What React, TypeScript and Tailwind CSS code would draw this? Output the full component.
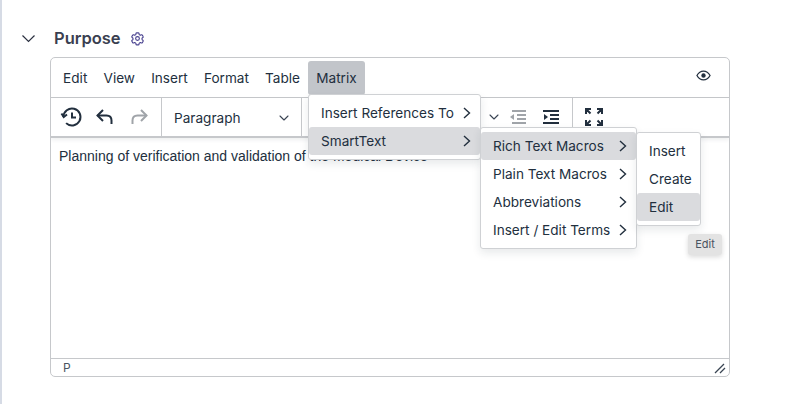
import React from 'react';
import { ChevronDown } from 'lucide-react';

const MenuBtn = ({ label, active = false }: { label: string; active?: boolean }) => (
  <div className={`h-[34px] px-[8.100px] pt-[1px] flex items-center rounded-[3px] ${active ? 'bg-[#c2c5ca]' : ''}`}>{label}</div>
);

const MenuItem = ({ label, active = false, arrow = true }: { label: string; active?: boolean; arrow?: boolean }) => (
  <div className={`h-[28px] w-full flex items-center justify-between rounded-[3px] pl-[12px] pr-[8px] text-[13.600px] text-[#222f3e] ${active ? 'bg-[#dadbde]' : ''}`}>
    <span className="whitespace-nowrap">{label}</span>
    {arrow && (
      <svg width="10" height="14" viewBox="0 0 10 14" fill="none" stroke="#222f3e" strokeWidth="1.400" className="ml-1 shrink-0">
        <path d="M2 2 L7.500 7 L2 12" />
      </svg>
    )}
  </div>
);

const Popup = ({ className, children }: { className: string; children: React.ReactNode }) => (
  <div className={`absolute z-10 bg-white border border-[#cfd1d4] rounded-[3px] py-[4px] shadow-[0_4px_8px_rgba(34,47,62,0.1)] ${className}`}>{children}</div>
);

export default function App() {
  return (
    <div className="relative w-[804px] h-[404px] overflow-hidden bg-white border-l-2 border-[#d6dbe5] font-['Inter',sans-serif]">
      <div className="flex items-center h-[20px] mt-[28px] ml-[16px]">
        <svg width="20" height="20" viewBox="0 0 20 20" fill="none" stroke="#2b3040" strokeWidth="1.200">
          <path d="M4.500 7.500L10.500 13.500L16.500 7.500" />
        </svg>
        <span className="ml-[16px] text-[16.500px] font-semibold text-[#3a3f51]">Purpose</span>
        <svg width="15" height="15" viewBox="0 0 24 24" fill="none" stroke="#4a4390" strokeWidth="1.800" className="ml-[9px]">
          <path d="M9.600 3.900c.1-.5.6-.9 1.100-.9h2.600c.5 0 1 .4 1.100.9l.2 1.400c.1.4.4.7.7.9l.5.3c.4.2.8.2 1.200.1l1.300-.5c.5-.2 1.100 0 1.400.5l1.300 2.300c.3.5.2 1.100-.3 1.400l-1.100.9c-.3.3-.5.7-.4 1.100v.6c0 .4.1.8.4 1.100l1.100.9c.4.3.5.9.3 1.400l-1.300 2.300c-.3.5-.9.7-1.400.5l-1.300-.5c-.4-.1-.8-.1-1.200.1l-.5.3c-.3.2-.6.5-.7.9l-.2 1.400c-.1.5-.6.9-1.100.9h-2.600c-.5 0-1-.4-1.100-.9l-.2-1.400c-.1-.4-.4-.7-.7-.9l-.5-.3c-.4-.2-.8-.2-1.200-.1l-1.300.5c-.5.2-1.100 0-1.400-.5l-1.300-2.300c-.3-.5-.2-1.100.3-1.400l1.100-.9c.3-.3.5-.7.4-1.100v-.6c0-.4-.1-.8-.4-1.100l-1.100-.9c-.4-.3-.5-.9-.3-1.400l1.300-2.300c.3-.5.9-.7 1.400-.5l1.300.5c.4.1.8.1 1.200-.1l.5-.3c.3-.2.6-.5.7-.9z" />
          <circle cx="12" cy="12" r="3" />
        </svg>
      </div>

      <div className="ml-[48px] mt-[9px] w-[680px] h-[320px] border border-[#c6c8cb] rounded-[5px] flex flex-col overflow-hidden">
        {/* menubar */}
        <div className="h-[40px] shrink-0 flex items-center justify-between pl-[4px] pr-[18px] text-[13.600px] text-[#222f3e] border-b border-[#c6c8cb]">
          <div className="flex items-center">
            <MenuBtn label="Edit" />
            <MenuBtn label="View" />
            <MenuBtn label="Insert" />
            <MenuBtn label="Format" />
            <MenuBtn label="Table" />
            <MenuBtn label="Matrix" active />
          </div>
          <svg width="15" height="15" viewBox="0 0 24 24" fill="none" stroke="#222f3e" strokeWidth="2" className="-mt-[4px]">
            <path d="M1.500 12C4 7.500 7.500 5 12 5s8 2.500 10.500 7c-2.500 4.500-6 7-10.500 7S4 16.500 1.500 12z" />
            <circle cx="12" cy="12" r="3.500" fill="#222f3e" stroke="none" />
          </svg>
        </div>

        {/* toolbar */}
        <div className="h-[40px] shrink-0 flex items-center border-b-2 border-[#c6c8cb] shadow-[0_2px_4px_rgba(34,47,62,0.08)]">
          <div className="w-[111px] h-full flex items-center pl-[9px] gap-[10px] border-r border-[#c6c8cb]">
            <svg width="24" height="24" viewBox="0 0 24 24" fill="none" stroke="#222f3e" strokeWidth="2">
              <path d="M3.500 12a8.500 8.500 0 1 1 2.600 6.100" />
              <path d="M1.500 8.500l2.200 3.500 3.300-2.500" />
              <path d="M12 7.500v5h4" />
            </svg>
            <svg width="24" height="24" viewBox="0 0 24 24" fill="none" stroke="#222f3e" strokeWidth="2">
              <path d="M9 5L3.500 10.500 9 16" />
              <path d="M3.500 10.500h9c3 0 5 2 5 5V19" />
            </svg>
            <svg width="24" height="24" viewBox="0 0 24 24" fill="none" stroke="#a0a4a9" strokeWidth="2">
              <path d="M13 5l5.500 5.500L13 16" />
              <path d="M18.500 10.500h-9c-3 0-5 2-5 5V19" />
            </svg>
          </div>
          <div className="w-[140px] h-full flex items-center justify-between pl-[12px] pr-[9px] pt-[2px] border-r border-[#c6c8cb] text-[13.600px] text-[#222f3e]">
            <span>Paragraph</span>
            <ChevronDown size={16} strokeWidth={1.600} className="text-[#3a4553]" />
          </div>
          <div className="w-[271px] h-full flex items-center justify-end border-r border-[#c6c8cb] pr-[12px]">
            <ChevronDown size={16} strokeWidth={1.600} className="text-[#3a4553] mr-[7px]" />
            <svg width="18" height="16" viewBox="0 0 18 16" fill="#a0a4a9" className="mr-[15px]">
              <rect x="3" y="1" width="14" height="2" />
              <rect x="8" y="5" width="9" height="2" />
              <rect x="8" y="9" width="9" height="2" />
              <rect x="3" y="13" width="14" height="2" />
              <path d="M1 8l4-3v6z" />
            </svg>
            <svg width="18" height="16" viewBox="0 0 18 16" fill="#222f3e">
              <rect x="1" y="1" width="16" height="2" />
              <rect x="8" y="5" width="9" height="2" />
              <rect x="8" y="9" width="9" height="2" />
              <rect x="1" y="13" width="16" height="2" />
              <path d="M6 8L2 5v6z" />
            </svg>
          </div>
          <div className="pl-[12px]">
            <svg width="18" height="18" viewBox="0 0 18 18" fill="none" stroke="#222f3e" strokeWidth="2">
              <path d="M1 6V1h5M1 1l4.500 4.500M12 1h5v5M17 1l-4.500 4.500M1 12v5h5M1 17l4.500-4.500M12 17h5v-5M17 17l-4.500-4.500" />
            </svg>
          </div>
        </div>

        {/* content */}
        <div className="flex-1 px-[8px] pt-[8px] font-['Liberation_Sans',sans-serif] text-[14px] leading-[20px] text-[#222f3e]">
          Planning of verification and validation of the Medical Device
        </div>

        {/* status bar */}
        <div className="h-[18px] shrink-0 border-t border-[#c6c8cb] flex items-center justify-between pl-[12px] pr-[3px] text-[12px] text-[#4a5461]">
          <span>P</span>
          <svg width="12" height="12" viewBox="0 0 12 12" stroke="#3a4553" strokeWidth="1.300" fill="none">
            <path d="M1 11L10 2M6 11L11 6" />
          </svg>
        </div>
      </div>

      <Popup className="left-[306px] top-[94px] w-[173px]">
        <MenuItem label="Insert References To" />
        <MenuItem label="SmartText" active />
      </Popup>
      <Popup className="left-[478px] top-[127px] w-[157px]">
        <MenuItem label="Rich Text Macros" active />
        <MenuItem label="Plain Text Macros" />
        <MenuItem label="Abbreviations" />
        <MenuItem label="Insert / Edit Terms" />
      </Popup>
      <Popup className="left-[634px] top-[132px] w-[65px] z-20">
        <MenuItem label="Insert" arrow={false} />
        <MenuItem label="Create" arrow={false} />
        <MenuItem label="Edit" arrow={false} active />
      </Popup>
      <div className="absolute z-20 left-[686px] top-[234px] w-[34px] h-[21px] rounded-[3px] bg-[#e3e3e3] shadow-[0_2px_5px_rgba(0,0,0,0.15)] flex items-center justify-center text-[11px] text-[#4a5461]">
        Edit
      </div>
    </div>
  );
}
